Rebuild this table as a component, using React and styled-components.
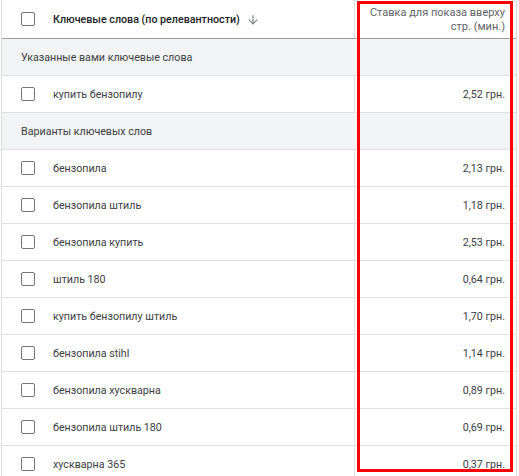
import React from 'react';
import styled, { createGlobalStyle } from 'styled-components';

const GlobalStyle = createGlobalStyle`
  html, body {
    margin: 0;
    padding: 0;
    background: #fff;
    overflow: hidden;
  }
  body {
    font-family: Roboto, "Liberation Sans", Arial, sans-serif;
  }
`;

const groups = [
  {
    title: 'Указанные вами ключевые слова',
    rows: [{ keyword: 'купить бензопилу', bid: '2,52 грн.' }],
  },
  {
    title: 'Варианты ключевых слов',
    rows: [
      { keyword: 'бензопила', bid: '2,13 грн.' },
      { keyword: 'бензопила штиль', bid: '1,18 грн.' },
      { keyword: 'бензопила купить', bid: '2,53 грн.' },
      { keyword: 'штиль 180', bid: '0,64 грн.' },
      { keyword: 'купить бензопилу штиль', bid: '1,70 грн.' },
      { keyword: 'бензопила stihl', bid: '1,14 грн.' },
      { keyword: 'бензопила хускварна', bid: '0,89 грн.' },
      { keyword: 'бензопила штиль 180', bid: '0,69 грн.' },
      { keyword: 'хускварна 365', bid: '0,37 грн.' },
    ],
  },
];

const SortArrow = () => (
  <ArrowIcon viewBox="0 0 24 24">
    <path d="M20 12l-1.41-1.41L13 16.17V4h-2v12.17l-5.58-5.59L4 12l8 8 8-8z" />
  </ArrowIcon>
);

const App = () => {
  return (
    <>
      <GlobalStyle />
      <Page>
        <Table>
          <HeaderRow>
            <KeywordCell>
              <Checkbox />
              <HeaderTitle>Ключевые слова (по релевантности)</HeaderTitle>
              <SortArrow />
            </KeywordCell>
            <BidHeader>
              Ставка для показа вверху
              <br />
              стр. (мин.)
            </BidHeader>
          </HeaderRow>
          {groups.map((group) => (
            <React.Fragment key={group.title}>
              <SectionRow>{group.title}</SectionRow>
              {group.rows.map((row) => (
                <Row key={row.keyword}>
                  <KeywordCell>
                    <Checkbox />
                    <KeywordText>{row.keyword}</KeywordText>
                  </KeywordCell>
                  <BidCell>{row.bid}</BidCell>
                </Row>
              ))}
            </React.Fragment>
          ))}
        </Table>
        <Highlight />
      </Page>
    </>
  );
};

const Page = styled.div`
  position: relative;
  width: 519px;
  height: 476px;
  overflow: hidden;
  padding-left: 1px;
  box-sizing: border-box;
`;

const Table = styled.div`
  width: 516px;
  box-sizing: border-box;
  border-left: 1px solid #dadce0;
  border-right: 1px solid #dadce0;
`;

const RowBase = styled.div`
  display: grid;
  grid-template-columns: 353px 1fr;
  box-sizing: border-box;
`;

const HeaderRow = styled(RowBase)`
  height: 39px;
  border-bottom: 1px solid #9e9e9e;
`;

const Row = styled(RowBase)`
  height: 37px;
  border-bottom: 1px solid #e0e0e0;
`;

const SectionRow = styled.div`
  height: 37px;
  box-sizing: border-box;
  display: flex;
  align-items: center;
  padding-left: 19px;
  background: #f1f3f4;
  border-bottom: 1px solid #e0e0e0;
  color: #3c4043;
  font-size: 10.7px;
`;

const KeywordCell = styled.div`
  display: flex;
  align-items: center;
  padding-left: 19px;
  border-right: 1px solid #e0e0e0;
`;

const Checkbox = styled.span`
  width: 14px;
  height: 14px;
  box-sizing: border-box;
  border: 1.5px solid #757575;
  border-radius: 2px;
  flex-shrink: 0;
  margin-right: 18px;
`;

const HeaderTitle = styled.span`
  font-size: 10.7px;
  font-weight: 500;
  color: #202124;
`;

const ArrowIcon = styled.svg`
  width: 14px;
  height: 14px;
  fill: #80868b;
  margin-left: 6px;
  margin-top: 2px;
`;

const KeywordText = styled.span`
  font-size: 10.7px;
  color: #3c4043;
`;

const BidHeader = styled.div`
  text-align: right;
  padding: 6px 11px 0 0;
  font-size: 11px;
  line-height: 13.5px;
  color: #5f6368;
`;

const BidCell = styled.div`
  display: flex;
  align-items: center;
  justify-content: flex-end;
  padding-right: 11px;
  font-size: 10.7px;
  color: #3c4043;
`;

const Highlight = styled.div`
  position: absolute;
  left: 357px;
  top: 1px;
  width: 156px;
  height: 471px;
  box-sizing: border-box;
  border: 3px solid #ff0000;
  pointer-events: none;
`;

export default App;
